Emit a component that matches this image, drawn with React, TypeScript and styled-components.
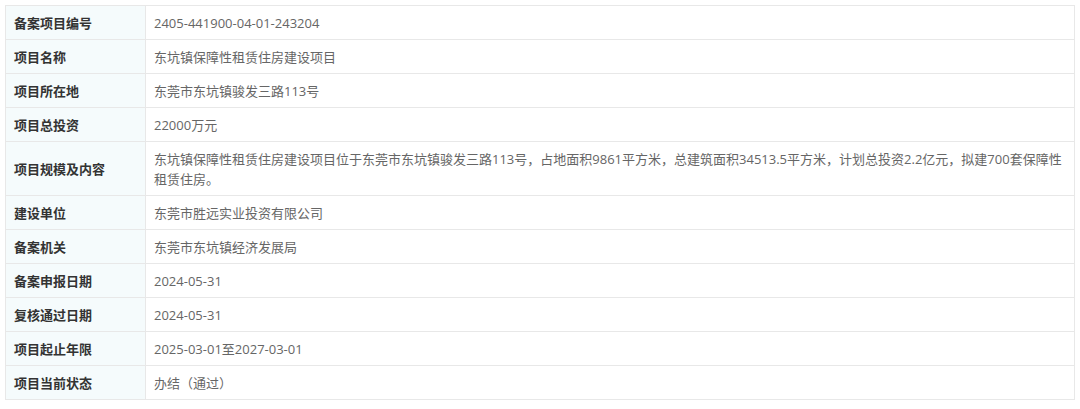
import React from 'react';
import styled, { createGlobalStyle } from 'styled-components';

const GlobalStyle = createGlobalStyle`
  body {
    margin: 0;
    background: #ffffff;
    font-family: "Open Sans", "Noto Sans CJK SC", sans-serif;
  }
`;

const Page = styled.div`
  padding: 5px 5px 0 5px;
`;

const Table = styled.table`
  width: 100%;
  border-collapse: collapse;
  font-size: 13px;
  line-height: 20px;
`;

const Row = styled.tr`
  td,
  th {
    border: 1px solid #e8e8e8;
  }
`;

const Label = styled.th`
  width: 123px;
  padding: 7px 8px 6px 8px;
  background: #f5fbfc;
  color: #333333;
  font-family: "Noto Sans CJK SC", sans-serif;
  font-weight: bold;
  text-align: left;
  vertical-align: middle;
  white-space: nowrap;
`;

const Value = styled.td`
  padding: 7px 8px 6px 8px;
  color: #666666;
  vertical-align: middle;
`;

const rows: [string, string][] = [
  ['备案项目编号', '2405-441900-04-01-243204'],
  ['项目名称', '东坑镇保障性租赁住房建设项目'],
  ['项目所在地', '东莞市东坑镇骏发三路113号'],
  ['项目总投资', '22000万元'],
  [
    '项目规模及内容',
    '东坑镇保障性租赁住房建设项目位于东莞市东坑镇骏发三路113号，占地面积9861平方米，总建筑面积34513.5平方米，计划总投资2.2亿元，拟建700套保障性租赁住房。',
  ],
  ['建设单位', '东莞市胜远实业投资有限公司'],
  ['备案机关', '东莞市东坑镇经济发展局'],
  ['备案申报日期', '2024-05-31'],
  ['复核通过日期', '2024-05-31'],
  ['项目起止年限', '2025-03-01至2027-03-01'],
  ['项目当前状态', '办结（通过）'],
];

const App: React.FC = () => {
  return (
    <Page>
      <GlobalStyle />
      <Table>
        <tbody>
          {rows.map(([label, value]) => (
            <Row key={label}>
              <Label>{label}</Label>
              <Value>{value}</Value>
            </Row>
          ))}
        </tbody>
      </Table>
    </Page>
  );
};

export default App;
